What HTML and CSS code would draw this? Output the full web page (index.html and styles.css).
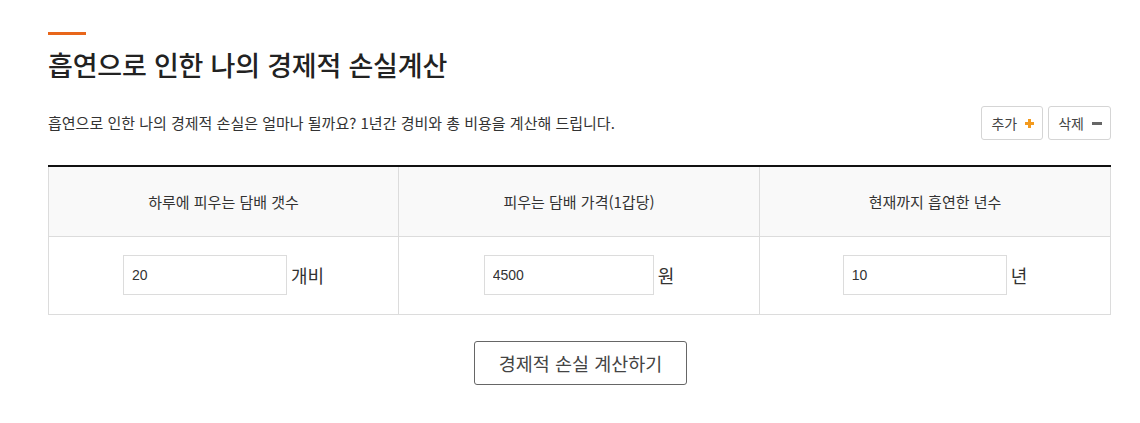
FILE: index.html
```html
<!DOCTYPE html>
<html lang="ko">
<head>
<meta charset="utf-8">
<title>흡연으로 인한 나의 경제적 손실계산</title>
<link rel="stylesheet" href="styles.css">
</head>
<body>
<div class="wrap">
  <div class="accent"></div>
  <h2 class="title">흡연으로 인한 나의 경제적 손실계산</h2>
  <div class="intro">
    <p class="desc">흡연으로 인한 나의 경제적 손실은 얼마나 될까요? 1년간 경비와 총 비용을 계산해 드립니다.</p>
    <div class="tools">
      <button class="tool" type="button">추가
        <svg class="ico" width="9" height="9" viewBox="0 0 9 9"><rect x="3" y="0" width="3" height="9" fill="#f39a1e"/><rect x="0" y="3" width="9" height="3" fill="#f39a1e"/></svg>
      </button>
      <button class="tool" type="button">삭제
        <svg class="ico" width="10" height="9" viewBox="0 0 10 9"><rect x="0" y="3" width="10" height="3" fill="#666"/></svg>
      </button>
    </div>
  </div>
  <table class="calc">
    <colgroup>
      <col class="c1"><col class="c2"><col class="c3">
    </colgroup>
    <thead>
      <tr>
        <th>하루에 피우는 담배 갯수</th>
        <th>피우는 담배 가격(1갑당)</th>
        <th>현재까지 흡연한 년수</th>
      </tr>
    </thead>
    <tbody>
      <tr>
        <td><div class="field"><input class="inp" type="text" value="20"><span class="unit">개비</span></div></td>
        <td><div class="field"><input class="inp inp-wide" type="text" value="4500"><span class="unit">원</span></div></td>
        <td><div class="field"><input class="inp" type="text" value="10"><span class="unit">년</span></div></td>
      </tr>
    </tbody>
  </table>
  <div class="actions">
    <button class="calc-btn" type="button">경제적 손실 계산하기</button>
  </div>
</div>
</body>
</html>
```

FILE: styles.css
```css
* { box-sizing: border-box; }
html, body { margin: 0; padding: 0; background: #fff; }
body {
  font-family: "Noto Sans CJK KR", "Noto Sans", sans-serif;
  color: #333;
}
.wrap {
  width: 1062px;
  margin-left: 48px;
  padding-top: 32px;
}
.accent {
  width: 38px;
  height: 3px;
  background: #e8661a;
}
.title {
  margin: 14px 0 0;
  font-size: 27px;
  line-height: 32px;
  font-weight: 500;
  letter-spacing: -0.2px;
  color: #222;
}
.intro {
  margin-top: 25px;
  display: flex;
  justify-content: space-between;
  align-items: center;
  height: 34px;
}
.desc {
  margin: 0;
  font-size: 15px;
  line-height: 20px;
  color: #333;
}
.tools {
  display: flex;
  gap: 5px;
  margin-right: -1px;
}
.tool {
  display: flex;
  align-items: center;
  gap: 8px;
  height: 34px;
  padding: 0 8px 0 9px;
  border: 1px solid #d5d5d5;
  border-radius: 3px;
  background: #fff;
  font-family: inherit;
  font-size: 14px;
  color: #444;
  cursor: pointer;
}
.ico { display: block; }
.calc {
  margin-top: 25px;
  width: 1062px;
  border-collapse: collapse;
  border-top: 2px solid #111;
  table-layout: fixed;
}
.c1 { width: 350px; }
.c2 { width: 361px; }
.c3 { width: 351px; }
.calc th {
  height: 70px;
  background: #f9f9f9;
  border: 1px solid #dcdcdc;
  border-top: none;
  font-size: 15px;
  font-weight: 400;
  color: #333;
  text-align: center;
  padding: 0;
}
.calc td {
  height: 78px;
  border: 1px solid #dcdcdc;
  padding: 0;
  text-align: center;
}
.field {
  display: flex;
  justify-content: center;
  align-items: center;
  gap: 3px;
}
.inp {
  width: 164px;
  height: 40px;
  border: 1px solid #dcdcdc;
  padding: 0 8px;
  font-family: "Liberation Sans", Arial, sans-serif;
  font-size: 14px;
  color: #333;
  background: #fff;
  outline: none;
}
.inp-wide { width: 170px; }
.unit {
  font-size: 18px;
  color: #333;
  padding-left: 1px;
}
.actions {
  display: flex;
  justify-content: center;
  margin-top: 26px;
  padding-left: 3px;
}
.calc-btn {
  width: 213px;
  height: 44px;
  border: 1px solid #666;
  border-radius: 3px;
  background: #fff;
  font-family: inherit;
  font-size: 18.5px;
  color: #444;
  cursor: pointer;
}
```
